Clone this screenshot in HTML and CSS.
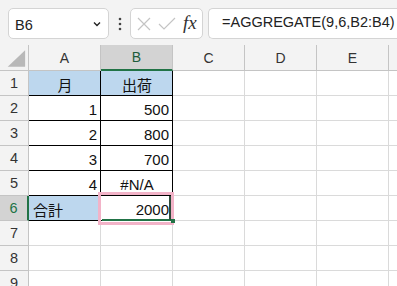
FILE: index.html
```html
<!DOCTYPE html>
<html lang="ja">
<head>
    <meta charset="UTF-8">
    <title>AGGREGATE</title>
    <link rel="stylesheet" href="styles.css">
</head>
<body>
    <div class="toolbar">
        <div class="name-box">
            <span>B6</span>
            <svg class="chevron" width="8" height="6" viewBox="0 0 8 6"><path d="M1 1.5 L4 4.5 L7 1.5" fill="none" stroke="#222" stroke-width="1.4"/></svg>
        </div>
        <div class="dots">
            <svg width="4" height="14" viewBox="0 0 4 14"><circle cx="2" cy="2" r="1.3" fill="#444"/><circle cx="2" cy="7" r="1.3" fill="#444"/><circle cx="2" cy="12" r="1.3" fill="#444"/></svg>
        </div>
        <div class="fx-box">
            <svg width="14" height="14" viewBox="0 0 14 14"><path d="M1 1 L13 13 M13 1 L1 13" stroke="#c4c4c4" stroke-width="1.2" fill="none"/></svg>
            <svg width="18" height="14" viewBox="0 0 18 14"><path d="M1 7 L6 12 L17 1" stroke="#c4c4c4" stroke-width="1.2" fill="none"/></svg>
            <span class="fx">fx</span>
        </div>
        <div class="formula">=AGGREGATE(9,6,B2:B4)</div>
    </div>

    <div class="sheet">
        <!-- header row -->
        <div class="cell hd corner">
            <svg width="29" height="26" viewBox="0 0 29 26"><polygon points="8,22 26,22 26,5" fill="#b8b8b8"/></svg>
        </div>
        <div class="cell hd">A</div>
        <div class="cell hd hd-sel">B</div>
        <div class="cell hd">C</div>
        <div class="cell hd">D</div>
        <div class="cell hd">E</div>
        <div class="cell hd last"></div>

        <div class="cell rh">1</div>
        <div class="cell t blue center">月</div>
        <div class="cell t blue center">出荷</div>
        <div class="cell"></div><div class="cell"></div><div class="cell"></div><div class="cell last"></div>

        <div class="cell rh">2</div>
        <div class="cell t right">1</div>
        <div class="cell t right">500</div>
        <div class="cell"></div><div class="cell"></div><div class="cell"></div><div class="cell last"></div>

        <div class="cell rh">3</div>
        <div class="cell t right">2</div>
        <div class="cell t right">800</div>
        <div class="cell"></div><div class="cell"></div><div class="cell"></div><div class="cell last"></div>

        <div class="cell rh">4</div>
        <div class="cell t right">3</div>
        <div class="cell t right">700</div>
        <div class="cell"></div><div class="cell"></div><div class="cell"></div><div class="cell last"></div>

        <div class="cell rh">5</div>
        <div class="cell t right">4</div>
        <div class="cell t center">#N/A</div>
        <div class="cell"></div><div class="cell"></div><div class="cell"></div><div class="cell last"></div>

        <div class="cell rh rh-sel">6</div>
        <div class="cell t blue">合計</div>
        <div class="cell t right active">
            2000
            <span class="active-mark"></span>
            <span class="fill-handle"></span>
            <span class="highlight"></span>
        </div>
        <div class="cell"></div><div class="cell"></div><div class="cell"></div><div class="cell last"></div>

        <div class="cell rh">7</div>
        <div class="cell"></div><div class="cell"></div><div class="cell"></div><div class="cell"></div><div class="cell"></div><div class="cell last"></div>

        <div class="cell rh">8</div>
        <div class="cell"></div><div class="cell"></div><div class="cell"></div><div class="cell"></div><div class="cell"></div><div class="cell last"></div>

        <div class="cell rh">9</div>
        <div class="cell"></div><div class="cell"></div><div class="cell"></div><div class="cell"></div><div class="cell"></div><div class="cell last"></div>
    </div>
</body>
</html>
```

FILE: styles.css
```css
body {
    margin: 0;
    background-color: #f3f3f3;
    font-family: "Liberation Sans", "Noto Sans CJK JP", sans-serif;
    overflow: hidden;
}
.toolbar {
    display: flex;
    align-items: flex-start;
    height: 45px;
    padding: 8px 0 0 8px;
    box-sizing: border-box;
}
.toolbar > div {
    flex: none;
}
.name-box {
    width: 101px;
    height: 31px;
    box-sizing: border-box;
    border: 1px solid #d4d4d4;
    border-radius: 5px;
    background-color: #fff;
    display: flex;
    align-items: center;
    justify-content: space-between;
    padding: 3px 7px 0 6px;
    font-size: 14.5px;
    color: #222;
}
.chevron {
    margin-top: -2px;
}
.dots {
    width: 21px;
    height: 31px;
    display: flex;
    align-items: center;
    justify-content: center;
}
.fx-box {
    width: 73px;
    height: 31px;
    box-sizing: border-box;
    border: 1px solid #d4d4d4;
    border-radius: 5px;
    background-color: #fff;
    display: flex;
    align-items: center;
    gap: 7px;
    padding-left: 6px;
}
.fx {
    font-family: "Liberation Serif", serif;
    font-style: italic;
    font-size: 19px;
    color: #333;
    margin-top: -2px;
}
.toolbar > .formula {
    flex: 1 1 auto;
    min-width: 0;
    height: 31px;
    margin-left: 5px;
    box-sizing: border-box;
    border: 1px solid #d4d4d4;
    border-right: none;
    border-radius: 5px 0 0 5px;
    background-color: #fff;
    padding: 5px 0 0 13px;
    font-size: 14.5px;
    color: #222;
    white-space: nowrap;
    overflow: hidden;
}
.sheet {
    display: grid;
    grid-template-columns: 29px repeat(5, 72px) 1fr;
    grid-template-rows: 26px repeat(9, 25px);
    background-color: #fff;
}
.cell {
    border-right: 1px solid #dadada;
    border-bottom: 1px solid #dadada;
    box-sizing: border-box;
    display: flex;
    align-items: center;
    padding: 2px 3px 0 4px;
    font-size: 15px;
    color: #111;
    white-space: nowrap;
}
.last {
    border-right: none;
}
.hd {
    background-color: #f3f3f3;
    border-color: #c4c4c4;
    justify-content: center;
    font-size: 14px;
    color: #333;
    padding: 0;
}
.corner {
    padding: 0;
}
.hd-sel {
    background-color: #d3d3d3;
    border-bottom: 2px solid #217346;
    color: #1d5c3a;
}
.rh {
    background-color: #f3f3f3;
    border-color: #c4c4c4;
    justify-content: center;
    font-size: 14.5px;
    color: #333;
    padding: 0;
}
.rh-sel {
    background-color: #d3d3d3;
    border-right: 2px solid #217346;
    color: #217346;
}
.t {
    border-color: #000;
}
.blue {
    background-color: #bdd7ee;
}
.center {
    justify-content: center;
}
.right {
    justify-content: flex-end;
}
.active {
    position: relative;
}
.active-mark {
    position: absolute;
    left: 1px;
    top: 0;
    width: 69px;
    height: 25px;
    box-sizing: border-box;
    border-bottom: 2px solid #217346;
    border-right: 2px solid #2e4a3a;
}
.highlight {
    position: absolute;
    left: -3px;
    top: -4px;
    width: 76px;
    height: 33px;
    box-sizing: border-box;
    border: 3px solid #f2b3c8;
}
.fill-handle {
    position: absolute;
    left: 70px;
    top: 23px;
    width: 4px;
    height: 4px;
    background-color: #217346;
    z-index: 2;
}
```
